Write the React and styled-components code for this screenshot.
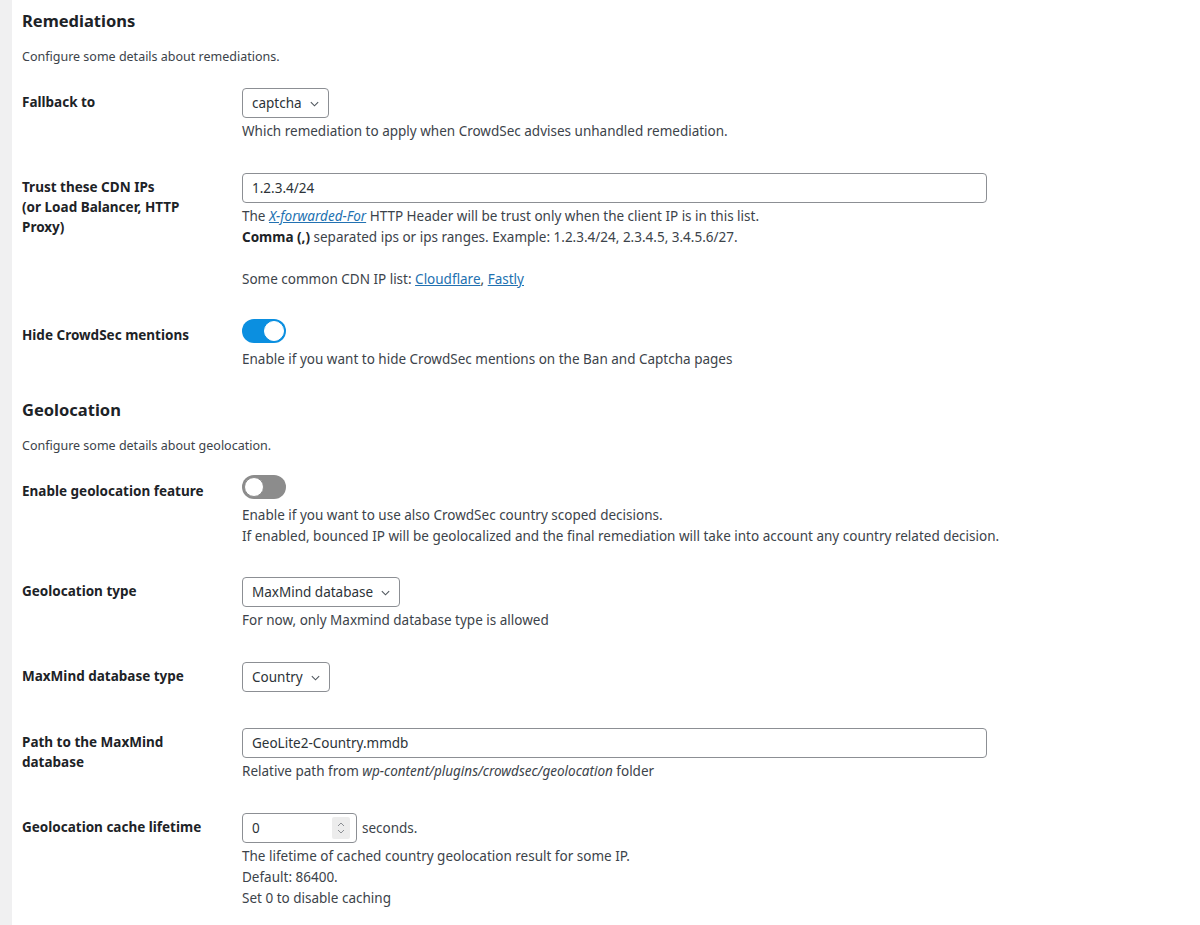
import React from 'react'
import styled, { createGlobalStyle } from 'styled-components'

const GlobalStyle = createGlobalStyle`
  body {
    margin: 0;
    background: #fff;
    font-family: "Noto Sans", "Open Sans", sans-serif;
    color: #3c434a;
  }
`

function Chevron() {
  return (
    <svg width="11" height="11" viewBox="0 0 12 12" fill="none">
      <path d="M2 4.5L6 8.5L10 4.5" stroke="#50575e" strokeWidth="1.2" />
    </svg>
  )
}

function Select({ value }) {
  return (
    <SelectBox>
      <span>{value}</span>
      <Chevron />
    </SelectBox>
  )
}

function App() {
  return (
    <Page>
      <GlobalStyle />
      <Strip />
      <Main>
        <SectionTitle>Remediations</SectionTitle>
        <SectionDesc>Configure some details about remediations.</SectionDesc>

        <Row>
          <Label>Fallback to</Label>
          <Field>
            <Select value="captcha" />
            <Desc>Which remediation to apply when CrowdSec advises unhandled remediation.</Desc>
          </Field>
        </Row>

        <Row>
          <Label>Trust these CDN IPs<br />(or Load Balancer, HTTP Proxy)</Label>
          <Field>
            <TextInput>1.2.3.4/24</TextInput>
            <Desc>
              The <Link as="em">X-forwarded-For</Link> HTTP Header will be trust only when the client IP is in this list.
              <br />
              <strong>Comma (,)</strong> separated ips or ips ranges. Example: 1.2.3.4/24, 2.3.4.5, 3.4.5.6/27.
              <br />
              <br />
              Some common CDN IP list: <Link>Cloudflare</Link>, <Link>Fastly</Link>
            </Desc>
          </Field>
        </Row>

        <Row>
          <Label>Hide CrowdSec mentions</Label>
          <Field>
            <Toggle $on />
            <Desc>Enable if you want to hide CrowdSec mentions on the Ban and Captcha pages</Desc>
          </Field>
        </Row>

        <SectionTitle $gap>Geolocation</SectionTitle>
        <SectionDesc>Configure some details about geolocation.</SectionDesc>

        <Row>
          <Label>Enable geolocation feature</Label>
          <Field>
            <Toggle />
            <Desc $tight>
              Enable if you want to use also CrowdSec country scoped decisions.
              <br />
              If enabled, bounced IP will be geolocalized and the final remediation will take into account any country related decision.
            </Desc>
          </Field>
        </Row>

        <Row>
          <Label>Geolocation type</Label>
          <Field>
            <Select value="MaxMind database" />
            <Desc>For now, only Maxmind database type is allowed</Desc>
          </Field>
        </Row>

        <Row>
          <Label>MaxMind database type</Label>
          <Field $tail>
            <Select value="Country" />
          </Field>
        </Row>

        <Row>
          <Label>Path to the MaxMind database</Label>
          <Field>
            <TextInput>GeoLite2-Country.mmdb</TextInput>
            <Desc>
              Relative path from <em>wp-content/plugins/crowdsec/geolocation</em> folder
            </Desc>
          </Field>
        </Row>

        <Row>
          <Label>Geolocation cache lifetime</Label>
          <Field>
            <Inline>
              <NumberInput>
                <span>0</span>
                <Spinner>
                  <svg width="10" height="14" viewBox="0 0 10 14" fill="none">
                    <path d="M2 5L5 2L8 5" stroke="#8c8f94" strokeWidth="1" />
                    <path d="M2 9L5 12L8 9" stroke="#8c8f94" strokeWidth="1" />
                  </svg>
                </Spinner>
              </NumberInput>
              <span>seconds.</span>
            </Inline>
            <Desc>
              The lifetime of cached country geolocation result for some IP.
              <br />
              Default: 86400.
              <br />
              Set 0 to disable caching
            </Desc>
          </Field>
        </Row>
      </Main>
    </Page>
  )
}

export default App

const Page = styled.div`
  display: flex;
  min-height: 925px;
`

const Strip = styled.div`
  width: 12px;
  flex-shrink: 0;
  background: #f0f0f1;
`

const Main = styled.div`
  flex: 1;
  padding: 0 10px;
`

const SectionTitle = styled.h2`
  margin: ${p => (p.$gap ? '14px' : '10px')} 0 0;
  font-size: 16.5px;
  font-weight: 700;
  line-height: 22px;
  color: #1d2327;
`

const SectionDesc = styled.p`
  margin: 15px 0 5px;
  font-size: 12.5px;
  line-height: 20px;
  color: #3c434a;
`

const Row = styled.div`
  display: grid;
  grid-template-columns: 220px 1fr;
`

const Label = styled.div`
  padding: 20px 25px 20px 0;
  font-size: 13.5px;
  font-weight: 700;
  line-height: 20px;
  color: #1d2327;
`

const Field = styled.div`
  padding: 16px 0 ${p => (p.$tail ? '20px' : '15px')};
  font-size: 13.5px;
`

const Desc = styled.p`
  margin: 3px 0 0;
  font-size: 13.5px;
  line-height: ${p => (p.$tight ? '20.5px' : '21px')};
  color: #3c434a;

  strong {
    font-weight: 700;
    color: #1d2327;
  }
`

const Link = styled.a`
  color: #2271b1;
  text-decoration: underline;
`

const SelectBox = styled.div`
  display: inline-flex;
  align-items: center;
  gap: 7px;
  box-sizing: border-box;
  height: 30px;
  padding: 0 8px 0 9px;
  border: 1px solid #8c8f94;
  border-radius: 4px;
  font-size: 13.5px;
  white-space: nowrap;
  color: #2c3338;
  background: #fff;

  svg {
    margin-top: 1px;
  }
`

const TextInput = styled.div`
  box-sizing: border-box;
  width: 745px;
  height: 30px;
  padding: 0 9px;
  display: flex;
  align-items: center;
  border: 1px solid #8c8f94;
  border-radius: 4px;
  font-size: 13.5px;
  color: #2c3338;
`

const Toggle = styled.div`
  position: relative;
  width: 44px;
  height: 24px;
  margin: -2px 0 6px;
  border-radius: 12px;
  background: ${p => (p.$on ? '#0b8fe0' : '#8c8c8c')};

  &::after {
    content: '';
    position: absolute;
    top: 2px;
    left: ${p => (p.$on ? '22px' : '2px')};
    width: 18px;
    height: 18px;
    border-radius: 50%;
    background: #fff;
    border: 1px solid ${p => (p.$on ? '#fff' : '#8c8c8c')};
  }
`

const Inline = styled.div`
  display: flex;
  align-items: center;
  gap: 5px;
  color: #3c434a;
`

const NumberInput = styled.div`
  box-sizing: border-box;
  width: 115px;
  height: 30px;
  padding: 0 6px 0 9px;
  display: flex;
  align-items: center;
  justify-content: space-between;
  border: 1px solid #8c8f94;
  border-radius: 4px;
  color: #2c3338;
`

const Spinner = styled.div`
  width: 18px;
  height: 22px;
  display: flex;
  align-items: center;
  justify-content: center;
  background: #ececec;
  border-radius: 2px;
`
